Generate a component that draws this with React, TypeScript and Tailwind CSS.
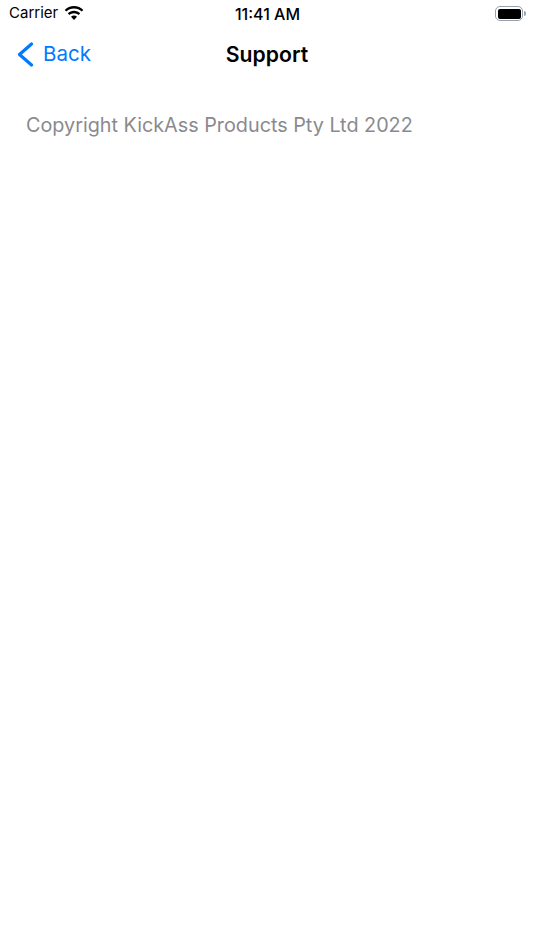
function WifiIcon() {
  return (
    <svg width="20" height="15" viewBox="0 0 20 15" fill="#000">
      <path d="M10 2.6c3 0 5.7 1.1 7.7 3l1.6-1.7C16.900 1.500 13.600 0 10 0S3.100 1.500.7 3.900l1.600 1.700c2-1.900 4.700-3 7.700-3z" />
      <path d="M10 7.300c1.700 0 3.300.7 4.500 1.700l1.700-1.700C14.600 5.700 12.400 4.800 10 4.800s-4.600.9-6.200 2.500L5.500 9c1.200-1 2.800-1.700 4.500-1.700z" />
      <path d="M10 9.500c-1.100 0-2.200.4-3 1.200l3 3.300 3-3.300c-.8-.8-1.900-1.200-3-1.200z" />
    </svg>
  );
}

function BackChevron() {
  return (
    <svg width="17" height="25" viewBox="0 0 17 25" fill="none" stroke="#007aff" strokeWidth="3.2" strokeLinecap="round" strokeLinejoin="round">
      <path d="M14.500 2 2.500 12.500 14.500 23" />
    </svg>
  );
}

export default function App() {
  return (
    <div className="flex h-[950px] w-[534px] flex-col overflow-hidden bg-white font-['Inter','Liberation_Sans',sans-serif]">
      {/* Status bar */}
      <div className="grid h-[27px] grid-cols-3 items-center pl-[9px] pr-[8px] text-black">
        <div className="flex items-center gap-[6px]">
          <span className="text-[15px]">Carrier</span>
          <WifiIcon />
        </div>
        <span className="text-center text-[16px] leading-none font-medium whitespace-nowrap">11:41 AM</span>
        <div className="flex items-center justify-end gap-[1px]">
          <div className="flex h-[15px] w-[28px] items-center rounded-[5px] border-[1.5px] border-gray-400 p-[1.5px]">
            <div className="h-full w-full rounded-[2px] bg-black" />
          </div>
          <div className="h-[5px] w-[1.5px] rounded-r-sm bg-gray-400" />
        </div>
      </div>

      {/* Nav bar */}
      <div className="grid h-[55px] grid-cols-3 items-center">
        <div className="flex items-center gap-[9px] pl-[17px] text-[#007aff]">
          <BackChevron />
          <span className="text-[20.5px] leading-none">Back</span>
        </div>
        <h1 className="text-center text-[21.2px] leading-none font-semibold whitespace-nowrap text-black">Support</h1>
      </div>

      {/* Content */}
      <div className="px-[26px] pt-[29px]">
        <p className="text-[19.8px] text-[#8a8a8e]">Copyright KickAss Products Pty Ltd 2022</p>
      </div>
    </div>
  );
}
